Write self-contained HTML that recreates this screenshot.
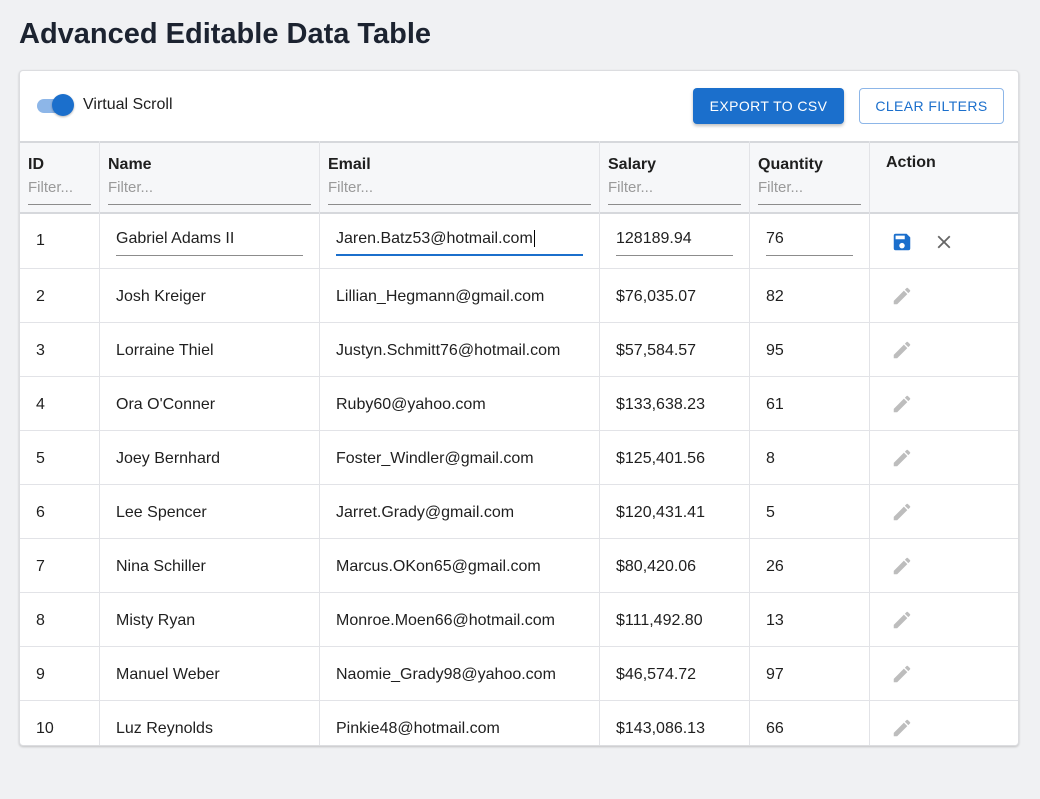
<!DOCTYPE html>
<html><head><meta charset="utf-8"><style>
*{box-sizing:border-box;margin:0;padding:0}
body{width:1040px;height:799px;background:#f0f1f3;font-family:"Liberation Sans",sans-serif;color:#1f1f1f;position:relative;overflow:hidden}
h1{position:absolute;left:19px;top:18px;font-size:29px;font-weight:bold;color:#1c2330;letter-spacing:0px}
.card{position:absolute;left:19px;top:70px;width:1000px;height:676px;background:#fff;border:1px solid #dcdde0;border-radius:4px;box-shadow:0 1px 2px rgba(0,0,0,.2);overflow:hidden}
.abs{position:absolute}
.tog{left:17px;top:28px;width:34px;height:14px;border-radius:7px;background:#8db6e8}
.knob{left:32px;top:23px;width:22px;height:22px;border-radius:50%;background:#1b6fcc;box-shadow:0 1px 2px rgba(0,0,0,.3)}
.vs{left:63px;top:25px;font-size:16px}
.btn1{left:673px;top:17px;width:151px;height:36px;background:#1b6fcc;color:#fff;border-radius:4px;font-size:14px;letter-spacing:.4px;display:flex;align-items:center;justify-content:center;box-shadow:0 2px 3px rgba(0,0,0,.25)}
.btn2{left:839px;top:17px;width:145px;height:36px;border:1px solid #8db6e8;color:#1b6fcc;border-radius:4px;font-size:14px;letter-spacing:.4px;display:flex;align-items:center;justify-content:center}
.head{left:0;top:70px;width:1000px;height:73px;background:#f6f7f9;border-top:2px solid #d6d8dc;border-bottom:2px solid #d6d8dc}
.vl{width:1px;background:#e2e3e7;top:70px;height:606px}
.hl{left:0;width:1000px;height:1px;background:#e2e3e7}
.ht{font-size:16px;font-weight:bold;top:85px}
.fl{font-size:15px;color:#9a9a9a;top:108px}
.ful{height:1px;background:#8c8c8c;top:133px}
.c{font-size:16px}
.ul{height:1px;background:#8c8c8c}
</style></head><body>
<h1>Advanced Editable Data Table</h1>
<div class="card">
<div class="abs tog"></div><div class="abs knob"></div><div class="abs vs">Virtual Scroll</div>
<div class="abs btn1">EXPORT TO CSV</div>
<div class="abs btn2">CLEAR FILTERS</div>
<div class="abs head"></div>
<div class="abs vl" style="left:79px"></div>
<div class="abs vl" style="left:299px"></div>
<div class="abs vl" style="left:579px"></div>
<div class="abs vl" style="left:729px"></div>
<div class="abs vl" style="left:849px"></div>

<div class="abs ht" style="left:8px">ID</div>
<div class="abs ht" style="left:88px">Name</div>
<div class="abs ht" style="left:308px">Email</div>
<div class="abs ht" style="left:588px">Salary</div>
<div class="abs ht" style="left:738px">Quantity</div>
<div class="abs ht" style="left:866px;top:83px">Action</div>
<div class="abs fl" style="left:8px">Filter...</div>
<div class="abs fl" style="left:88px">Filter...</div>
<div class="abs fl" style="left:308px">Filter...</div>
<div class="abs fl" style="left:588px">Filter...</div>
<div class="abs fl" style="left:738px">Filter...</div>
<div class="abs ful" style="left:8px;width:63px"></div>
<div class="abs ful" style="left:88px;width:203px"></div>
<div class="abs ful" style="left:308px;width:263px"></div>
<div class="abs ful" style="left:588px;width:133px"></div>
<div class="abs ful" style="left:738px;width:103px"></div>

<div class="abs c" style="left:16px;top:161px">1</div>
<div class="abs c" style="left:96px;top:159px">Gabriel Adams II</div>
<div class="abs ul" style="left:96px;top:184px;width:187px"></div>
<div class="abs c" style="left:316px;top:159px">Jaren.Batz53@hotmail.com<span style="border-left:1px solid #000;margin-left:1px"></span></div>
<div class="abs" style="left:316px;top:183px;width:247px;height:2px;background:#1b6fcc"></div>
<div class="abs c" style="left:596px;top:159px">128189.94</div>
<div class="abs ul" style="left:596px;top:184px;width:117px"></div>
<div class="abs c" style="left:746px;top:159px">76</div>
<div class="abs ul" style="left:746px;top:184px;width:87px"></div>
<svg class="abs" style="left:871px;top:160px" width="22" height="22" viewBox="0 0 24 24"><path fill="#1b6fcc" d="M17 3H5a2 2 0 0 0-2 2v14a2 2 0 0 0 2 2h14a2 2 0 0 0 2-2V7l-4-4zm-5 16a3 3 0 1 1 0-6 3 3 0 0 1 0 6zm3-10H5V5h10v4z"/></svg>
<svg class="abs" style="left:913px;top:160px" width="22" height="22" viewBox="0 0 24 24"><path fill="#666" d="M19 6.41 17.59 5 12 10.59 6.41 5 5 6.41 10.59 12 5 17.590 6.41 19 12 13.41 17.59 19 19 17.59 13.41 12z"/></svg>
<div class="abs hl" style="top:197px"></div>

<div id="rows"></div>
</div>
<script>
var d=[["2","Josh Kreiger","Lillian_Hegmann@gmail.com","$76,035.07","82"],["3","Lorraine Thiel","Justyn.Schmitt76@hotmail.com","$57,584.57","95"],["4","Ora O'Conner","Ruby60@yahoo.com","$133,638.23","61"],["5","Joey Bernhard","Foster_Windler@gmail.com","$125,401.56","8"],["6","Lee Spencer","Jarret.Grady@gmail.com","$120,431.41","5"],["7","Nina Schiller","Marcus.OKon65@gmail.com","$80,420.06","26"],["8","Misty Ryan","Monroe.Moen66@hotmail.com","$111,492.80","13"],["9","Manuel Weber","Naomie_Grady98@yahoo.com","$46,574.72","97"],["10","Luz Reynolds","Pinkie48@hotmail.com","$143,086.13","66"]];
var h="",xs=[16,96,316,596,746];
d.forEach(function(r,i){var t=198+i*54;for(var j=0;j<5;j++)h+='<div class="abs c" style="left:'+xs[j]+'px;top:'+(t+19)+'px">'+r[j]+'</div>';
h+='<svg class="abs" style="left:871px;top:'+(t+16)+'px" width="22" height="22" viewBox="0 0 24 24"><path fill="#bdbdbd" d="M3 17.25V21h3.75L17.81 9.94l-3.75-3.75L3 17.25zM20.71 7.04a1 1 0 0 0 0-1.41l-2.34-2.34a1 1 0 0 0-1.41 0l-1.83 1.83 3.75 3.75 1.83-1.83z"/></svg>';
if(i<8)h+='<div class="abs hl" style="top:'+(t+53)+'px"></div>';});
document.getElementById("rows").outerHTML=h;
</script>
</body></html>
